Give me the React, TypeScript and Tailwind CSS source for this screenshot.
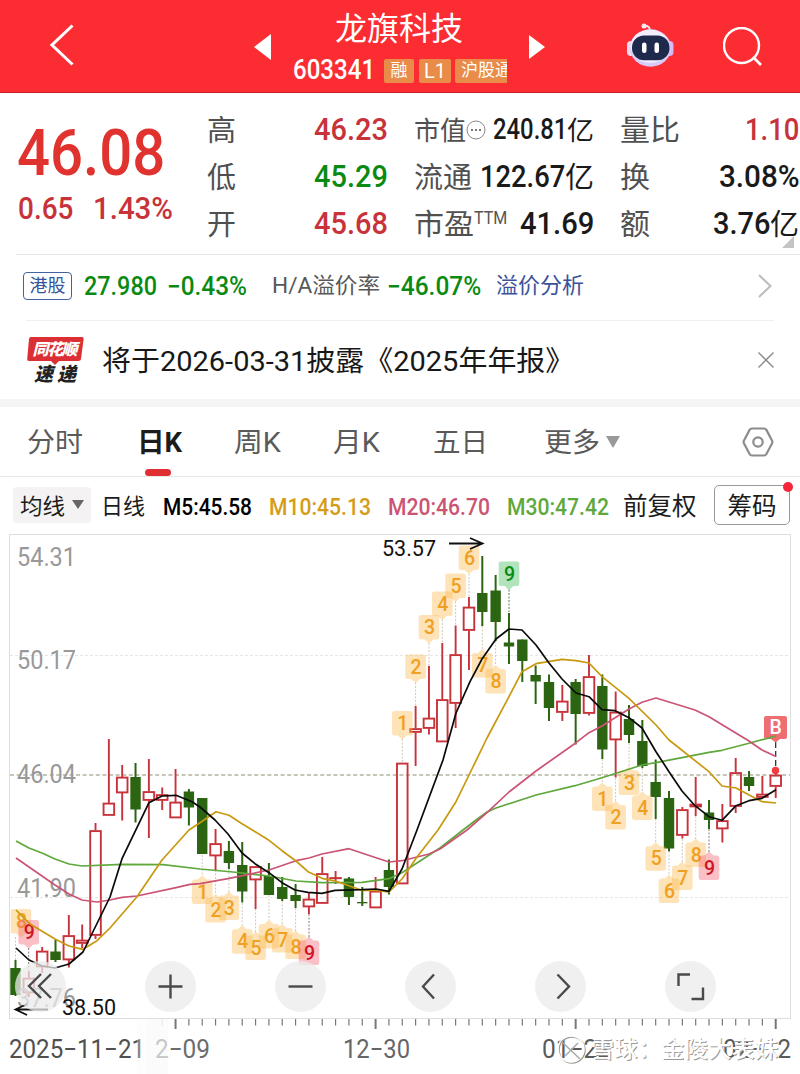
import { FC, ReactNode, useLayoutEffect, useRef, useState } from "react";

interface FitProps {
  w: number;
  className?: string;
  children: ReactNode;
}

// squeezes a piece of text into an exact width, for the condensed numerals
const Fit: FC<FitProps> = ({ w, className = "", children }) => {
  const ref = useRef<HTMLSpanElement>(null);
  const [scale, setScale] = useState(1);

  useLayoutEffect(() => {
    if (ref.current) {
      setScale(w / ref.current.offsetWidth);
    }
  }, [w, children]);

  return (
    <span className={`flex shrink-0 items-center ${className}`} style={{ width: w }}>
      <span
        ref={ref}
        className="inline-block shrink-0 origin-left whitespace-nowrap leading-none"
        style={{ transform: `scaleX(${scale})` }}
      >
        {children}
      </span>
    </span>
  );
};

const RED = "#c8323a";
const GREEN = "#2b6512";

const START_X = 15.5;
const STEP = 13.337;
const xAt = (i: number) => START_X + STEP * i;

// [up ? 1 : 0, high, body top, body bottom, low] in chart pixels
const candles: number[][] = [
  [0, 960, 968, 995, 996],
  [1, 971, 978, 993, 997],
  [1, 947, 951, 967, 973],
  [0, 940, 951.5, 960, 962],
  [1, 915, 935.5, 960, 967.5],
  [1, 924.5, 940, 943.5, 948],
  [1, 823, 830.5, 935.5, 939],
  [1, 739, 803, 815.5, 815.5],
  [1, 765, 777, 793, 820.5],
  [0, 763, 777, 809.5, 822.5],
  [1, 759, 791.5, 800.5, 838],
  [1, 787.5, 794.5, 800.5, 810],
  [1, 769, 802, 818, 818],
  [0, 789, 791.5, 807.5, 825.5],
  [0, 798, 798, 854, 854],
  [1, 829, 843.5, 856, 870],
  [0, 841, 851, 863, 869],
  [0, 842, 865, 891.5, 902.5],
  [1, 866, 866.5, 880, 909],
  [0, 863, 876, 895, 895],
  [0, 877, 887, 899, 901],
  [0, 884, 895, 901, 908],
  [1, 893, 899, 907, 914],
  [1, 857, 873.5, 903.5, 903.5],
  [1, 871, 877.5, 877.5, 884],
  [0, 877, 878.5, 897, 905],
  [0, 887, 902, 902.5, 906],
  [1, 877, 891, 908, 908],
  [0, 859.5, 870, 887, 894.5],
  [1, 763, 763, 884, 884],
  [1, 706, 728.5, 732.5, 766],
  [1, 666, 718, 728.5, 734.5],
  [1, 643, 699.5, 742, 742],
  [1, 625.5, 654.5, 703.5, 728],
  [1, 597, 607, 630.5, 670],
  [0, 556, 593, 612, 626],
  [0, 575, 590.5, 622, 641],
  [0, 613, 642.5, 646.5, 664],
  [0, 639.5, 639.5, 661, 682],
  [0, 665.5, 675, 681.5, 704],
  [0, 674.5, 682, 708, 721],
  [1, 685, 701, 712.5, 721],
  [0, 679, 682, 714, 744.5],
  [1, 655, 676.5, 713.5, 715.5],
  [0, 674.5, 686, 749.5, 759],
  [1, 691.5, 712, 740, 777.5],
  [0, 705, 719, 735, 743],
  [0, 720, 741, 766, 768],
  [0, 759.5, 782, 797, 819],
  [0, 791, 798, 848.5, 851.5],
  [1, 807, 809.5, 835.5, 838.5],
  [1, 777, 804, 807, 816],
  [0, 800, 812.5, 820, 829],
  [1, 804, 820.5, 829, 842.5],
  [1, 758, 772.5, 806.5, 813],
  [0, 771, 777, 786, 791],
  [1, 776, 794, 797.5, 797.5],
  [1, 770, 775, 786.5, 798],
];

const averages = [
  {
    color: "#5fa83c",
    points:
      "16,841 29,848 42,853 55,859 69,864 82,866 122,864.3 163,864.7 200,869 233,872 269,876 296,881 322,882.7 362,882.3 389,878.7 402,872.7 440,848 463,830 476,820 487,812 496,808 536,795 575,785.7 602,777.7 642,765 656,762.7 682,757.7 709,752.3 722,750.3 749,743.3 776,736",
  },
  {
    color: "#cb5474",
    points:
      "16,858 55,885 69,894 82,900 97,902 110,900 122,897.3 137,896 176,887.7 190,884.3 200,883.7 228,878.7 269,870 296,860.7 309,858 322,854 349,848.7 376,857.7 389,862 402,860.7 429,854 440,849 467,830 487,812.7 509,792 536,771 576,742.7 589,732.7 602,726 629,709 642,702.3 656,698 695,710 709,716.7 749,741 762,750 776,756.5",
  },
  {
    color: "#c8980f",
    points:
      "16,910 30,924 55,939 69,946 83,949.3 97,940.7 110,928 137,896.7 162,860 189,830 200,822.7 216,811.7 229,815.3 242,823.7 269,840.3 282,850.7 296,861 308,871.7 322,878.3 335,881 349,885.7 362,890.3 376,890.5 389,892 402,879 417,857 438,830 456,801.7 470,773 487,738 509,696.7 522,671.7 536,663.7 562,659.3 576,660.7 589,663 602,676.7 629,698.3 656,725 669,740 709,771.7 722,786 736,788 762,801.7 776,803",
  },
  {
    color: "#0a0a0a",
    points:
      "16,948 29,960 42,966 55,968 69,964 83,952 110,897 122,858.7 149,802.7 162,796 176,795.3 192,801.7 200,807 215,820 228,834 242,853 255,863.7 269,872.7 282,882.7 295,890 308,892.3 322,893.3 335,890.3 362,889.7 376,889 389,891.3 402,869 417,830 443,760 456,713 470,681.7 482,659 496,639 509,629 522,630 536,645 549,663 562,679 576,693 589,696.7 602,709.7 615,710.7 629,717.7 642,728 656,751.7 669,771.7 682,791 695,805.7 709,816.7 722,820.3 736,805.7 749,800.7 762,798.3 776,789.7",
  },
];

type Tone = "orange" | "red" | "green";

interface MarkProps {
  x: number;
  y: number;
  label: string;
  tone?: Tone;
}

const tones: Record<Tone, { fill: string; text: string; line: string }> = {
  orange: { fill: "#fbb84a", text: "#f0a020", line: "#d0c8b8" },
  red: { fill: "#f45f70", text: "#cf1422", line: "#8a7a7a" },
  green: { fill: "#3cb85a", text: "#078a10", line: "#557755" },
};

// marks over a candle point down, marks under it point up; y is the far edge
const overMarks: (MarkProps & { to: number })[] = [
  { x: 21, y: 909, label: "8", to: 960 },
  { x: 28.7, y: 920, label: "9", tone: "red", to: 970 },
  { x: 402.3, y: 711, label: "1", to: 762 },
  { x: 415.6, y: 654.5, label: "2", to: 706 },
  { x: 429, y: 615, label: "3", to: 666 },
  { x: 442.3, y: 591.5, label: "4", to: 642 },
  { x: 455.6, y: 573.5, label: "5", to: 625 },
  { x: 469, y: 545.5, label: "6", to: 597 },
  { x: 509, y: 561.5, label: "9", tone: "green", to: 612 },
];

const underMarks: (MarkProps & { from: number })[] = [
  { x: 202.2, y: 904, label: "1", from: 855 },
  { x: 215.6, y: 922.5, label: "2", from: 870 },
  { x: 228.9, y: 920, label: "3", from: 869 },
  { x: 242.2, y: 953.7, label: "4", from: 903 },
  { x: 255.6, y: 960, label: "5", from: 909 },
  { x: 269, y: 948.5, label: "6", from: 895 },
  { x: 282.2, y: 952.5, label: "7", from: 901 },
  { x: 295.6, y: 959, label: "8", from: 908 },
  { x: 309, y: 965, label: "9", tone: "red", from: 914 },
  { x: 482.3, y: 677.5, label: "7", from: 626 },
  { x: 495.6, y: 693.5, label: "8", from: 641 },
  { x: 602.3, y: 811, label: "1", from: 759 },
  { x: 615.6, y: 829.5, label: "2", from: 778 },
  { x: 629, y: 795, label: "3", from: 743 },
  { x: 642.3, y: 820, label: "4", from: 768 },
  { x: 655.7, y: 870.7, label: "5", from: 819 },
  { x: 669, y: 903, label: "6", from: 851 },
  { x: 682.3, y: 890, label: "7", from: 839 },
  { x: 695.7, y: 867, label: "8", from: 816 },
  { x: 709, y: 880, label: "9", tone: "red", from: 829 },
];

const Mark: FC<MarkProps & { down?: boolean }> = ({ x, y, label, tone = "orange", down }) => {
  const s = down ? 1 : -1;
  const d = `M${x - 8},${y} H${x + 8} Q${x + 10.3},${y} ${x + 10.3},${y + 2.3 * s} V${y + 22 * s} Q${x + 10.3},${y + 24.5 * s} ${x + 8},${y + 24.5 * s} H${x + 4.5} L${x},${y + 28.5 * s} L${x - 4.5},${y + 24.5 * s} H${x - 8} Q${x - 10.3},${y + 24.5 * s} ${x - 10.3},${y + 22 * s} V${y + 2.3 * s} Q${x - 10.3},${y} ${x - 8},${y} Z`;

  return (
    <g>
      <path d={d} fill={tones[tone].fill} fillOpacity={0.4} />
      <text
        x={x + 0.5}
        y={y + 12.3 * s + 7}
        textAnchor="middle"
        fontSize={19.5}
        fontWeight={500}
        fill={tones[tone].text}
      >
        {label}
      </text>
    </g>
  );
};

const Candle: FC<{ i: number; c: number[] }> = ({ i, c }) => {
  const [up, high, top, bottom, low] = c;
  const x = xAt(i);

  if (!up) {
    return (
      <g fill={GREEN}>
        <rect x={x - 1} y={high} width={2} height={low - high} />
        <rect x={x - 5.2} y={top} width={10.4} height={Math.max(bottom - top, 1.3)} />
      </g>
    );
  }

  return (
    <g stroke={RED} strokeWidth={1.9} fill="none">
      <path d={`M${x},${high} V${top} M${x},${bottom} V${low}`} />
      <rect x={x - 5.3} y={top + 0.6} width={10.6} height={Math.max(bottom - top - 1.2, 0.1)} />
    </g>
  );
};

const yLabels = [
  { y: 565.5, text: "54.31" },
  { y: 668.5, text: "50.17" },
  { y: 783, text: "46.04" },
  { y: 897, text: "41.90" },
  { y: 1007, text: "37.76" },
];

const xLabels = [
  { x: 9, w: 136, text: "2025−11−21", fill: "#505050" },
  { x: 155, w: 55, text: "2−09", fill: "#6c6c6c" },
  { x: 343, w: 67, text: "12−30", fill: "#666" },
  { x: 542, w: 69, text: "01−22", fill: "#5a5a5a" },
  { x: 723, w: 68, text: "02−12", fill: "#5a5a5a" },
];

const KChart: FC = () => (
  <svg
    viewBox="0 530 800 544"
    width={800}
    height={544}
    className="block font-['Roboto','Noto_Sans_CJK_SC',sans-serif]"
  >
    <rect x={9.5} y={534.5} width={781} height={484} fill="#fff" stroke="#dedede" />
    <path d="M10,655.5 H790 M10,897.5 H790" stroke="#e6e6e6" strokeDasharray="3 2" />
    <path d="M10,775 H790" stroke="#b5b39f" strokeWidth={1.4} strokeDasharray="4 2.6" />

    {candles.map((c, i) => (
      <Candle key={i} i={i} c={c} />
    ))}

    <g fill="#999" fontSize={25}>
      {yLabels.map((l) => (
        <text
          key={l.text}
          x={17}
          y={l.y}
          textLength={59}
          lengthAdjust="spacingAndGlyphs"
        >
          {l.text}
        </text>
      ))}
    </g>

    {overMarks.map((m) => (
      <path
        key={`o${m.x}`}
        d={`M${m.x < 25 ? 15.5 : m.x},${m.y + 28} V${m.to}`}
        stroke={tones[m.tone ?? "orange"].line}
        strokeDasharray="2 1.5"
      />
    ))}
    {underMarks.map((m) => (
      <path
        key={`u${m.x}`}
        d={`M${m.x},${m.from} V${m.y - 28}`}
        stroke={tones[m.tone ?? "orange"].line}
        strokeDasharray="2 1.5"
      />
    ))}
    {overMarks.map(({ to, ...m }) => (
      <Mark key={m.x} {...m} down />
    ))}
    {underMarks.map(({ from, ...m }) => (
      <Mark key={m.x} {...m} />
    ))}

    {/* buy mark on the last candle */}
    <path d="M775.7,742 V768" stroke="#222" strokeWidth={1.2} strokeDasharray="6 3" />
    <path d="M766,716 H785 Q787,716 787,718 V737 Q787,739 785,739 H780 L775.5,742.5 L771,739 H766 Q764,739 764,737 V718 Q764,716 766,716 Z" fill="#ee6e72" />
    <circle cx={775.5} cy={770.5} r={3.7} fill="#f33b3f" />

    {averages.map((a) => (
      <polyline
        key={a.color}
        points={a.points}
        fill="none"
        stroke={a.color}
        strokeWidth={1.7}
        strokeLinejoin="round"
      />
    ))}
    <text x={775.7} y={734} fontSize={19.5} fontWeight={500} fill="#fff" textAnchor="middle">
      B
    </text>

    <g fill="#111" fontSize={22}>
      <text x={382} y={556} textLength={54} lengthAdjust="spacingAndGlyphs">
        53.57
      </text>
      <text x={62} y={1015} textLength={54} lengthAdjust="spacingAndGlyphs">
        38.50
      </text>
    </g>
    <path d="M449,543.5 H482 M470,538 L482.5,543.5 L470,549" stroke="#111" strokeWidth={1.8} fill="none" />
    <path d="M48,1009.5 H16 M27,1004 L15.5,1009.5 L27,1015" stroke="#111" strokeWidth={1.8} fill="none" />

    {/* time axis */}
    {candles.map((_, i) => {
      if (i < 11) {
        return null;
      }
      const major = (i - 12) % 15 === 0;
      return (
        <path
          key={i}
          d={`M${xAt(i)},1019 V${major ? 1029 : 1025.5}`}
          stroke={i === 11 ? "#ccc" : "#777"}
          strokeWidth={major ? 2 : 1.2}
        />
      );
    })}
    <g fontSize={25.5}>
      {xLabels.map((l) => (
        <text
          key={l.text}
          x={l.x}
          y={1057.5}
          fill={l.fill}
          textLength={l.w}
          lengthAdjust="spacingAndGlyphs"
        >
          {l.text}
        </text>
      ))}
    </g>
    <path d="M137,1019 H168 V1074 H137 Z" fill="#fafafa" fillOpacity={0.3} />
    <path d="M147,1019 H168 V1074 H147 Z" fill="#fafafa" fillOpacity={0.5} />

    <g fill="none" strokeWidth={1.5}>
      <circle cx={572} cy={1050} r={13} stroke="#999" />
      <circle cx={571} cy={1049} r={13} stroke="#fff" />
      <path d="M561,1041 L580,1059 M565,1056 L578,1043" stroke="#aaa" />
    </g>
    <g fontSize={23} fontWeight={500}>
      <text x={592} y={1058} fill="#9a9a9a" textLength={187}>
        雪球：金陵大表妹
      </text>
      <text x={591} y={1057} fill="#fff" textLength={187}>
        雪球：金陵大表妹
      </text>
    </g>
  </svg>
);

const buttonIcons = [
  "M26,13 L14,25 L26,37 M36,13 L24,25 L36,37",
  "M25.5,13.5 V37.5 M13.5,25.5 H37.5",
  "M13.5,25.5 H37.5",
  "M29,13.5 L18,25.5 L29,37.5",
  "M22.5,13.5 L34,25.5 L22.5,37.5",
  "M13.5,25 V13.5 H25 M38,26.5 V38 H26.5",
];

const Robot: FC = () => (
  <svg viewBox="0 0 48 46" className="h-[46px] w-12">
    <path d="M24,9 Q24,4 19,3.5" stroke="#fbe3ea" strokeWidth={2} fill="none" />
    <circle cx={18} cy={4} r={2.5} fill="#fbe9f2" />
    <rect x={1} y={19} width={8} height={15} rx={4} fill="#f3dcf2" />
    <rect x={39.5} y={19} width={8} height={15} rx={4} fill="#d8b6f5" />
    <ellipse cx={24.5} cy={26} rx={20.5} ry={18.7} fill="#d9ccf8" />
    <ellipse cx={24} cy={24.2} rx={19.5} ry={16.5} fill="#f2eefd" />
    <rect x={6} y={13.5} width={37.5} height={24.8} rx={12} fill="#1e2a4c" />
    <rect x={16} y={20.5} width={4.5} height={10.5} rx={2.2} fill="#fff" />
    <rect x={28.5} y={20.5} width={4.5} height={10.5} rx={2.2} fill="#fff" />
  </svg>
);

const Tag: FC<{ className: string; children: ReactNode }> = ({ className, children }) => (
  <span
    className={`flex h-6 shrink-0 items-center overflow-hidden whitespace-nowrap bg-[#e98b49] text-[17px] leading-none text-white ${className}`}
  >
    {children}
  </span>
);

const Header: FC = () => (
  <header className="flex h-[93px] shrink-0 border-b border-[#c8222a] bg-[#fb2d33] text-white">
    <svg viewBox="0 0 24 42" className="mt-6 ml-[50px] h-[42px] w-6 shrink-0">
      <path d="M22.5,1.5 L2,21 L22.5,40.5" stroke="#fff" strokeWidth={3} fill="none" />
    </svg>
    <svg viewBox="0 0 17 26" className="mt-[34px] ml-[180px] h-[26px] w-[17px] shrink-0">
      <path d="M17,0 V26 L0,13 Z" fill="#fff" />
    </svg>
    <div className="ml-[22px] flex w-[214px] shrink-0 flex-col">
      <div className="mt-[13px] ml-[42px] text-[32px] leading-8">龙旗科技</div>
      <div className="mt-3 flex items-center">
        <Fit w={82} className="text-[27px] font-medium">
          603341
        </Fit>
        <Tag className="ml-[9px] w-[30px] justify-center rounded-xs">融</Tag>
        <Tag className="ml-[5px] w-[32px] justify-center rounded-xs text-[20px]">L1</Tag>
        <Tag className="ml-1 w-[52px] rounded-l-xs pl-1.5">沪股通</Tag>
      </div>
    </div>
    <svg viewBox="0 0 16 24" className="mt-[35px] ml-[22px] h-6 w-4 shrink-0">
      <path d="M0,0 V24 L16,12 Z" fill="#fff" />
    </svg>
    <div className="mt-[22px] ml-[81px] shrink-0">
      <Robot />
    </div>
    <svg viewBox="0 0 40 40" className="mt-[27px] ml-[49px] h-10 w-10 shrink-0">
      <circle cx={18.5} cy={18.5} r={17.5} stroke="#fff" strokeWidth={2.4} fill="none" />
      <path d="M30,30 L38,38" stroke="#fff" strokeWidth={2.6} />
    </svg>
  </header>
);

const label = "pt-[3px] text-[29px] text-[#505050]";
const value = "text-[31.5px] font-medium";

const Quote: FC = () => (
  <section className="flex h-[161px] shrink-0">
    <div className="w-[207px] shrink-0 pl-[17px] pt-[31px]">
      <Fit w={148} className="h-[60px] text-[64px] font-medium text-[#e0322f]">
        46.08
      </Fit>
      <div className="mt-2 ml-px flex text-[32px] font-medium text-[#c8323a]">
        <Fit w={55}>0.65</Fit>
        <Fit w={80} className="ml-5">
          1.43%
        </Fit>
      </div>
    </div>
    <div className="w-[207px] shrink-0 pt-[13px]">
      {[
        ["高", "46.23", "text-[#c8323a]"],
        ["低", "45.29", "text-[#0a8a12]"],
        ["开", "45.68", "text-[#c8323a]"],
      ].map(([name, val, color]) => (
        <div key={name} className="flex h-[47px] items-center">
          <Fit w={29} className={label}>
            {name}
          </Fit>
          <Fit w={73.5} className={`ml-[78px] ${value} ${color}`}>
            {val}
          </Fit>
        </div>
      ))}
    </div>
    <div className="w-[206px] shrink-0 pt-[13px] text-[#1a1a1a]">
      <div className="flex h-[47px] items-center">
        <Fit w={52} className="pt-[2px] text-[26px] text-[#505050]">
          市值
        </Fit>
        <svg viewBox="0 0 20 20" className="h-5 w-5 shrink-0">
          <circle cx={10} cy={10} r={9} stroke="#888" fill="none" />
          <path d="M5,10 H7 M9,10 H11 M13,10 H15" stroke="#777" strokeWidth={1.8} />
        </svg>
        <Fit w={74} className="ml-[7px] text-[29px] font-medium">
          240.81
        </Fit>
        <Fit w={27} className="pt-[2px] text-[26px]">
          亿
        </Fit>
      </div>
      <div className="flex h-[47px] items-center">
        <Fit w={58} className={label}>
          流通
        </Fit>
        <Fit w={85} className={`ml-2 ${value}`}>
          122.67
        </Fit>
        <Fit w={29} className="pt-[3px] text-[29px]">
          亿
        </Fit>
      </div>
      <div className="flex h-[47px] items-center">
        <Fit w={60} className={label}>
          市盈
        </Fit>
        <Fit w={33} className="mb-3 text-[18px] text-[#555]">
          TTM
        </Fit>
        <Fit w={74} className={`ml-[13px] ${value}`}>
          41.69
        </Fit>
      </div>
    </div>
    <div className="relative w-[180px] shrink-0 pt-[13px] text-[#1a1a1a]">
      <div className="flex h-[47px] items-center">
        <Fit w={60} className={label}>
          量比
        </Fit>
        <Fit w={54} className={`ml-[65px] ${value} text-[#c8323a]`}>
          1.10
        </Fit>
      </div>
      <div className="flex h-[47px] items-center">
        <Fit w={30} className={label}>
          换
        </Fit>
        <Fit w={81} className={`ml-[69px] ${value}`}>
          3.08%
        </Fit>
      </div>
      <div className="flex h-[47px] items-center">
        <Fit w={30} className={label}>
          额
        </Fit>
        <Fit w={57} className={`ml-[63px] ${value}`}>
          3.76
        </Fit>
        <Fit w={29} className="pt-[3px] text-[29px]">
          亿
        </Fit>
      </div>
      <svg viewBox="0 0 12 12" className="absolute right-1.5 bottom-1.5 h-3 w-3">
        <path d="M12,0 V12 H0 Z" fill="#c4c4c4" />
      </svg>
    </div>
  </section>
);

const HkRow: FC = () => (
  <section className="flex h-[65px] shrink-0 items-center pb-[3px]">
    <span className="ml-[23px] flex h-7 w-[49px] shrink-0 items-center justify-center rounded-sm border border-[#4561a0] text-[18px] leading-none text-[#33539c]">
      港股
    </span>
    <Fit w={73} className="ml-[12px] text-[25px] font-medium text-[#0a8a12]">
      27.980
    </Fit>
    <Fit w={80} className="ml-[10px] text-[25px] font-medium text-[#0a8a12]">
      −0.43%
    </Fit>
    <Fit w={108} className="ml-[25px] text-[22px] text-[#585858]">
      H/A溢价率
    </Fit>
    <Fit w={94} className="ml-[7px] text-[25px] font-medium text-[#0a8a12]">
      −46.07%
    </Fit>
    <Fit w={88} className="ml-[15px] text-[22px] text-[#3b529b]">
      溢价分析
    </Fit>
    <svg viewBox="0 0 14 24" className="ml-[174px] h-6 w-3.5 shrink-0">
      <path d="M1,1 L12.5,12 L1,23" stroke="#bbb" strokeWidth={2} fill="none" />
    </svg>
  </section>
);

const NewsRow: FC = () => (
  <section className="flex h-[78px] shrink-0 items-center pb-px">
    <svg viewBox="0 0 58 50" className="ml-[26px] h-[50px] w-[58px] shrink-0">
      <path d="M5,2 H56 Q58,2 57.6,4 L55,24 Q54.7,26 52.5,26 H33 L29,30 L25,26 H3 Q0.8,26 1.2,24 L3,4 Q3.2,2 5,2 Z" fill="#dc2f33" />
      <g
        fontFamily="Noto Sans CJK SC, sans-serif"
        fontWeight={900}
        fontStyle="italic"
        textAnchor="middle"
      >
        <text x={29} y={20} fontSize={16} fill="#fff" textLength={45}>
          同花顺
        </text>
        <text x={29} y={46} fontSize={19} fill="#222" textLength={42}>
          速递
        </text>
      </g>
    </svg>
    <Fit w={472} className="ml-[18px] pt-[4px] text-[28px] text-[#181818]">
      将于2026-03-31披露《2025年年报》
    </Fit>
    <svg viewBox="0 0 16 16" className="ml-[184px] h-4 w-4 shrink-0">
      <path d="M0.5,0.5 L15.5,15.5 M15.5,0.5 L0.5,15.5" stroke="#888" strokeWidth={1.4} />
    </svg>
  </section>
);

const Tabs: FC = () => (
  <nav className="flex h-[70px] shrink-0 items-center border-b border-[#e8e8e8] text-[27px] text-[#5a5a5a]">
    <Fit w={56} className="ml-[27px] pt-1">
      分时
    </Fit>
    <div className="relative ml-[54px] flex h-full shrink-0 items-center">
      <Fit w={45} className="pt-1 font-bold text-[#1c1c1c]">
        日K
      </Fit>
      <span className="absolute bottom-0 left-2 h-[7px] w-[26px] rounded-full bg-[#e02f33]" />
    </div>
    <Fit w={47} className="ml-[52px] pt-1">
      周K
    </Fit>
    <Fit w={47} className="ml-[52px] pt-1">
      月K
    </Fit>
    <Fit w={55} className="ml-[53px] pt-1">
      五日
    </Fit>
    <Fit w={56} className="ml-[56px] pt-1">
      更多
    </Fit>
    <svg viewBox="0 0 14 12" className="ml-[6px] h-3 w-3.5 shrink-0">
      <path d="M0,0 H14 L7,12 Z" fill="#999" />
    </svg>
    <svg viewBox="0 0 32 30" className="ml-[122px] h-[30px] w-8 shrink-0">
      <path
        d="M10,1.5 H22 Q23.6,1.5 24.4,2.9 L30,13.5 Q30.8,15 30,16.5 L24.4,27 Q23.6,28.5 22,28.5 H10 Q8.4,28.5 7.6,27 L2,16.5 Q1.2,15 2,13.5 L7.6,2.9 Q8.4,1.5 10,1.5 Z"
        stroke="#8c8c8c"
        strokeWidth={2.2}
        fill="none"
      />
      <circle cx={16} cy={15} r={4.7} stroke="#8c8c8c" strokeWidth={2.2} fill="none" />
    </svg>
  </nav>
);

const Toolbar: FC = () => (
  <div className="flex h-[53px] shrink-0 items-center pb-1 pt-1.5 text-[#1c1c1c]">
    <span className="ml-[13px] flex h-9 w-[78px] shrink-0 items-center rounded-sm bg-[#f4f2f3] pl-[7px]">
      <Fit w={45} className="pt-1 text-[22px]">
        均线
      </Fit>
      <svg viewBox="0 0 12 9" className="ml-[7px] h-[9px] w-3">
        <path d="M0,0 H12 L6,9 Z" fill="#666" />
      </svg>
    </span>
    <Fit w={44} className="ml-[10px] pt-1 text-[22px]">
      日线
    </Fit>
    <Fit w={89} className="ml-[18px] pt-1.5 text-[23px] font-medium text-black">
      M5:45.58
    </Fit>
    <Fit w={102} className="ml-[17px] pt-1.5 text-[23px] font-medium text-[#d69c17]">
      M10:45.13
    </Fit>
    <Fit w={102} className="ml-[17px] pt-1.5 text-[23px] font-medium text-[#cb5474]">
      M20:46.70
    </Fit>
    <Fit w={102} className="ml-[17px] pt-1.5 text-[23px] font-medium text-[#5fa83c]">
      M30:47.42
    </Fit>
    <Fit w={74} className="ml-[14px] pt-1.5 text-[24.5px]">
      前复权
    </Fit>
    <button className="relative ml-[17px] flex h-10 w-[76px] shrink-0 items-center justify-center rounded-[5px] border border-[#999]">
      <Fit w={49} className="pt-1.5 text-[24.5px]">
        筹码
      </Fit>
      <span className="absolute -top-1 -right-1 h-2.5 w-2.5 rounded-full bg-[#f5263a]" />
    </button>
  </div>
);

const App: FC = () => {
  return (
    <div className="flex h-[1074px] w-[800px] flex-col overflow-hidden bg-white font-['Roboto','Noto_Sans_CJK_SC',sans-serif]">
      <Header />
      <Quote />
      <div className="ml-4 h-px shrink-0 bg-[#e4e4e4]" />
      <HkRow />
      <div className="mr-[26px] ml-[26px] h-px shrink-0 bg-[#f0f0f0]" />
      <NewsRow />
      <div className="h-2 shrink-0 bg-[#f5f5f5]" />
      <Tabs />
      <Toolbar />
      <main className="relative h-[544px] shrink-0">
        <KChart />
        <div className="absolute top-[431px] left-[15px] flex gap-[79px]">
          {buttonIcons.map((d) => (
            <button
              key={d}
              className="h-[51px] w-[51px] rounded-full bg-[#ebebeb]/75"
            >
              <svg viewBox="0 0 51 51" className="h-full w-full">
                <path d={d} stroke="#4a4a4a" strokeWidth={2.4} fill="none" />
              </svg>
            </button>
          ))}
        </div>
      </main>
    </div>
  );
};

export default App;
